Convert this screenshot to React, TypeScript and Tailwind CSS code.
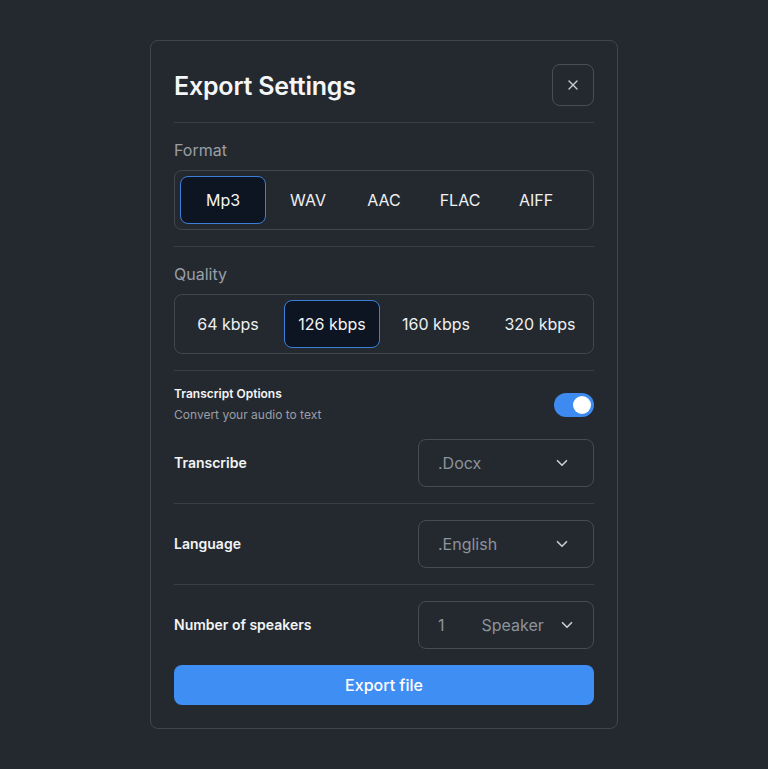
import { X, ChevronDown } from "lucide-react";

const formats = ["WAV", "AAC", "FLAC", "AIFF"];
const qualities = ["64 kbps", "126 kbps", "160 kbps", "320 kbps"];

function Select({ children }: { children: React.ReactNode }) {
  return (
    <div className="w-[176px] h-12 border border-[#474c54] rounded-lg flex items-center justify-between pl-[19px] pr-[22px] text-base text-[#8d939b]">
      {children}
      <ChevronDown size={18} strokeWidth={2.2} className="text-[#c9ccd1]" />
    </div>
  );
}

export default function App() {
  return (
    <div
      className="min-h-[769px] bg-[#242930] flex justify-center pt-10"
      style={{ fontFamily: "Inter, 'Noto Sans', sans-serif" }}
    >
      <div className="w-[468px] h-[689px] border border-[#41464e] rounded-lg p-[23px] flex flex-col">
        <div className="flex items-center justify-between h-[42px] shrink-0">
          <h1 className="mt-1 text-[25px] font-semibold text-[#f5f6f7] tracking-[-0.2px]">Export Settings</h1>
          <button className="w-[42px] h-[42px] border border-[#4a4f57] rounded-lg flex items-center justify-center text-[#c4c7cc]">
            <X size={16} strokeWidth={2} />
          </button>
        </div>

        <div className="h-px shrink-0 bg-[#3a3f46] mt-4" />

        <div className="mt-[15px]">
          <div className="text-base text-[#9a9fa6] leading-6">Format</div>
          <div className="mt-2 h-[60px] border border-[#41464e] rounded-lg p-[5px] flex">
            <div className="w-[86px] h-full rounded-lg border border-[#3b7fd9] bg-[#0e1522] flex items-center justify-center text-base text-[#f3f4f6]">
              Mp3
            </div>
            <div className="ml-1 flex">
              {formats.map((f) => (
                <div key={f} className="w-[76px] h-full flex items-center justify-center text-base text-[#eef0f2]">
                  {f}
                </div>
              ))}
            </div>
          </div>
        </div>

        <div className="h-px shrink-0 bg-[#3a3f46] mt-4" />

        <div className="mt-[15px]">
          <div className="text-base text-[#9a9fa6] leading-6">Quality</div>
          <div className="mt-2 h-[60px] border border-[#41464e] rounded-lg p-[5px] grid grid-cols-4 gap-2">
            {qualities.map((q, i) => (
              <div
                key={q}
                className={
                  i === 1
                    ? "h-full rounded-lg border border-[#3b7fd9] bg-[#0e1522] flex items-center justify-center text-base text-[#f3f4f6]"
                    : "h-full flex items-center justify-center text-base text-[#eef0f2]"
                }
              >
                {q}
              </div>
            ))}
          </div>
        </div>

        <div className="h-px shrink-0 bg-[#3a3f46] mt-4" />

        <div className="mt-[15px] flex items-center justify-between">
          <div>
            <div className="text-xs font-semibold text-[#f3f4f6] leading-4">Transcript Options</div>
            <div className="text-xs text-[#9a9fa6] leading-4 mt-[5px]">Convert your audio to text</div>
          </div>
          <div className="w-10 h-6 rounded-full bg-[#3d8af0] flex items-center justify-end pr-[3px]">
            <div className="w-[18px] h-[18px] rounded-full bg-white" />
          </div>
        </div>

        <div className="mt-4 flex items-center justify-between">
          <span className="text-sm font-semibold text-[#f3f4f6]">Transcribe</span>
          <Select>.Docx</Select>
        </div>

        <div className="h-px shrink-0 bg-[#3a3f46] mt-4" />

        <div className="mt-4 flex items-center justify-between">
          <span className="text-sm font-semibold text-[#f3f4f6]">Language</span>
          <Select>.English</Select>
        </div>

        <div className="h-px shrink-0 bg-[#3a3f46] mt-4" />

        <div className="mt-4 flex items-center justify-between">
          <span className="text-sm font-semibold text-[#f3f4f6]">Number of speakers</span>
          <div className="w-[176px] h-12 border border-[#474c54] rounded-lg flex items-center pl-[19px] pr-[17px] text-base text-[#8d939b]">
            <span>1</span>
            <span className="ml-[37px]">Speaker</span>
            <ChevronDown size={18} strokeWidth={2.2} className="text-[#c9ccd1] ml-auto" />
          </div>
        </div>

        <button className="mt-4 h-10 shrink-0 w-full rounded-lg bg-[#3f8ef4] text-base font-medium text-white">
          Export file
        </button>
      </div>
    </div>
  );
}
